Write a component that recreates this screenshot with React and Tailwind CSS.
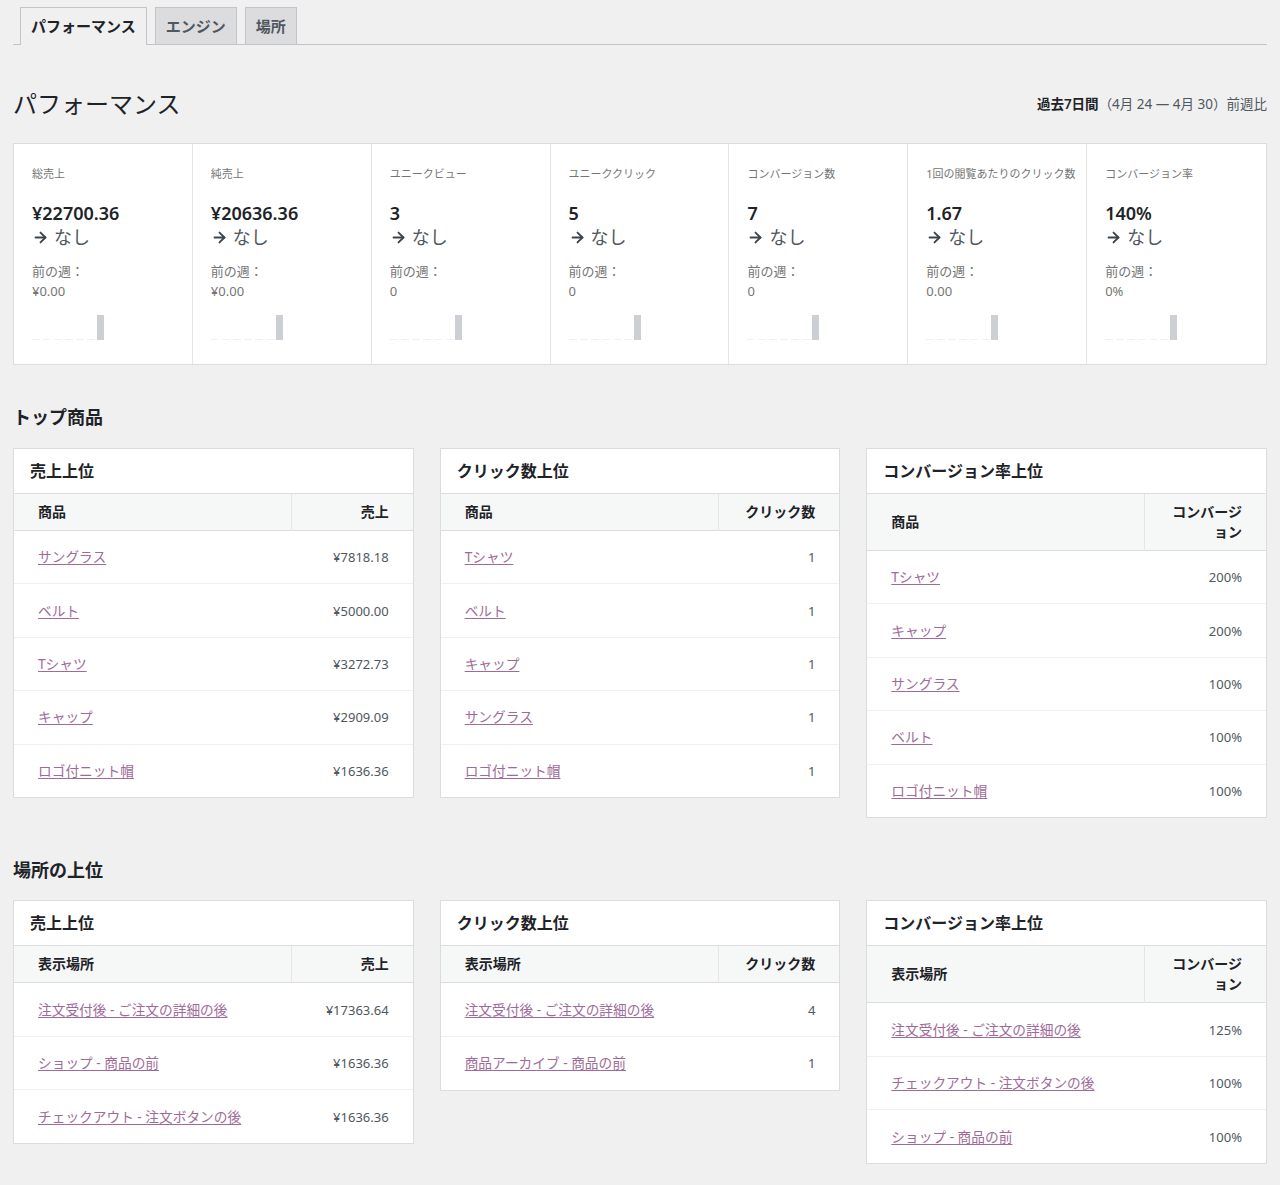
import React from 'react';
import { ArrowRight } from 'lucide-react';

const font = { fontFamily: '"Noto Sans", "Noto Sans CJK JP", sans-serif' };

const stats = [
  { label: '総売上', value: '¥22700.36', prev: '¥0.00' },
  { label: '純売上', value: '¥20636.36', prev: '¥0.00' },
  { label: 'ユニークビュー', value: '3', prev: '0' },
  { label: 'ユニーククリック', value: '5', prev: '0' },
  { label: 'コンバージョン数', value: '7', prev: '0' },
  { label: '1回の閲覧あたりのクリック数', value: '1.67', prev: '0.00' },
  { label: 'コンバージョン率', value: '140%', prev: '0%' },
];

const productCards = [
  {
    title: '売上上位',
    col: '売上',
    rows: [
      ['サングラス', '¥7818.18'],
      ['ベルト', '¥5000.00'],
      ['Tシャツ', '¥3272.73'],
      ['キャップ', '¥2909.09'],
      ['ロゴ付ニット帽', '¥1636.36'],
    ],
  },
  {
    title: 'クリック数上位',
    col: 'クリック数',
    rows: [
      ['Tシャツ', '1'],
      ['ベルト', '1'],
      ['キャップ', '1'],
      ['サングラス', '1'],
      ['ロゴ付ニット帽', '1'],
    ],
  },
  {
    title: 'コンバージョン率上位',
    col: 'conv',
    rows: [
      ['Tシャツ', '200%'],
      ['キャップ', '200%'],
      ['サングラス', '100%'],
      ['ベルト', '100%'],
      ['ロゴ付ニット帽', '100%'],
    ],
  },
];

const placeCards = [
  {
    title: '売上上位',
    col: '売上',
    rows: [
      ['注文受付後 - ご注文の詳細の後', '¥17363.64'],
      ['ショップ - 商品の前', '¥1636.36'],
      ['チェックアウト - 注文ボタンの後', '¥1636.36'],
    ],
  },
  {
    title: 'クリック数上位',
    col: 'クリック数',
    rows: [
      ['注文受付後 - ご注文の詳細の後', '4'],
      ['商品アーカイブ - 商品の前', '1'],
    ],
  },
  {
    title: 'コンバージョン率上位',
    col: 'conv',
    rows: [
      ['注文受付後 - ご注文の詳細の後', '125%'],
      ['チェックアウト - 注文ボタンの後', '100%'],
      ['ショップ - 商品の前', '100%'],
    ],
  },
];

const Sparkline = () => (
  <svg width="90" height="26" viewBox="0 0 90 26">
    {[0, 11, 22, 33, 44, 55].map((x) => (
      <rect key={x} x={x} y="24" width="8" height="1" fill="#f0f0f0" />
    ))}
    <rect x="65" y="0" width="7" height="25" fill="#ccd0d4" />
  </svg>
);

const TopCard = ({ card, firstCol }) => (
  <div className="bg-white border border-[#dcdcde] self-start">
    <div className="h-[45px] flex items-center px-4 border-b border-[#dcdcde]">
      <h3 className="text-[16px] font-semibold text-[#1d2327]">{card.title}</h3>
    </div>
    <table className="w-full border-collapse text-[13px]">
      <thead>
        <tr className="bg-[#f6f7f7] border-b border-[#dcdcde]">
          <th className="text-left font-semibold text-[14px] text-[#1d2327] leading-[20px] py-2 px-6 border-r border-[#e5e5e5]">
            {firstCol}
          </th>
          <th className="w-[121px] text-right font-semibold text-[14px] text-[#1d2327] leading-[20px] py-2 px-6">
            {card.col === 'conv' ? (
              <>
                コンバージ
                <br />
                ョン
              </>
            ) : (
              card.col
            )}
          </th>
        </tr>
      </thead>
      <tbody>
        {card.rows.map((r, i) => (
          <tr key={i} className={i < card.rows.length - 1 ? 'border-b border-[#f0f0f1]' : ''}>
            <td className="h-[53.4px] px-6 leading-[20px]">
              <a href="#" className="text-[13.7px] text-[#9e6b99] underline underline-offset-2">
                {r[0]}
              </a>
            </td>
            <td className="h-[53.4px] px-6 text-right text-[#50575e] leading-[20px]">{r[1]}</td>
          </tr>
        ))}
      </tbody>
    </table>
  </div>
);

export default function App() {
  return (
    <div className="min-h-[1185px] bg-[#f0f0f1] text-[#1d2327] px-[13px] pt-[7px] pb-6" style={font}>
      {/* Tabs */}
      <div className="flex items-end gap-2 border-b border-[#c3c4c7] pl-[7px]">
        <div className="h-[38px] px-[10px] flex items-center border border-b-0 border-[#c3c4c7] bg-[#f0f0f1] text-[15px] font-semibold text-[#1d2327] -mb-px">
          パフォーマンス
        </div>
        <div className="h-[37px] px-[10px] flex items-center border border-b-0 border-[#c3c4c7] bg-[#dcdcde] text-[15px] font-semibold text-[#50575e]">
          エンジン
        </div>
        <div className="h-[37px] px-[10px] flex items-center border border-b-0 border-[#c3c4c7] bg-[#dcdcde] text-[15px] font-semibold text-[#50575e]">
          場所
        </div>
      </div>

      {/* Heading */}
      <div className="flex items-center justify-between mt-[44px] h-[30px]">
        <h1 className="text-[24px] font-normal text-[#1d2327]">パフォーマンス</h1>
        <div className="text-[13.5px] text-[#50575e]">
          <span className="font-semibold text-[#1d2327]">過去7日間</span>（4月 24 — 4月 30）前週比
        </div>
      </div>

      {/* Stats */}
      <div className="mt-[24px] bg-white border border-[#dcdcde] grid grid-cols-7">
        {stats.map((s, i) => (
          <div
            key={s.label}
            className={`pt-[22px] pb-[24px] px-[18px] ${i < stats.length - 1 ? 'border-r border-[#e5e5e5]' : ''}`}
          >
            <div className="text-[11px] leading-[16px] text-[#757575] whitespace-nowrap">{s.label}</div>
            <div className="mt-[19px] text-[18px] leading-[24px] font-semibold text-[#1d2327]">{s.value}</div>
            <div className="flex items-center gap-[5px] text-[18px] leading-[24px] text-[#50575e]">
              <ArrowRight size={17} strokeWidth={2.6} className="text-[#3c434a]" />
              <span>なし</span>
            </div>
            <div className="mt-[12px] text-[13px] leading-[20px] text-[#757575]">前の週：</div>
            <div className="text-[13px] leading-[20px] text-[#757575]">{s.prev}</div>
            <div className="mt-[14px] h-[25px]">
              <Sparkline />
            </div>
          </div>
        ))}
      </div>

      {/* Top products */}
      <h2 className="mt-[40px] text-[18px] font-semibold leading-[24px] text-[#1d2327]">トップ商品</h2>
      <div className="mt-[19px] grid grid-cols-3 gap-[26px] items-start">
        {productCards.map((c) => (
          <TopCard key={c.title} card={c} firstCol="商品" />
        ))}
      </div>

      {/* Top places */}
      <h2 className="mt-[40px] text-[18px] font-semibold leading-[24px] text-[#1d2327]">場所の上位</h2>
      <div className="mt-[18px] grid grid-cols-3 gap-[26px] items-start">
        {placeCards.map((c) => (
          <TopCard key={c.title} card={c} firstCol="表示場所" />
        ))}
      </div>
    </div>
  );
}
